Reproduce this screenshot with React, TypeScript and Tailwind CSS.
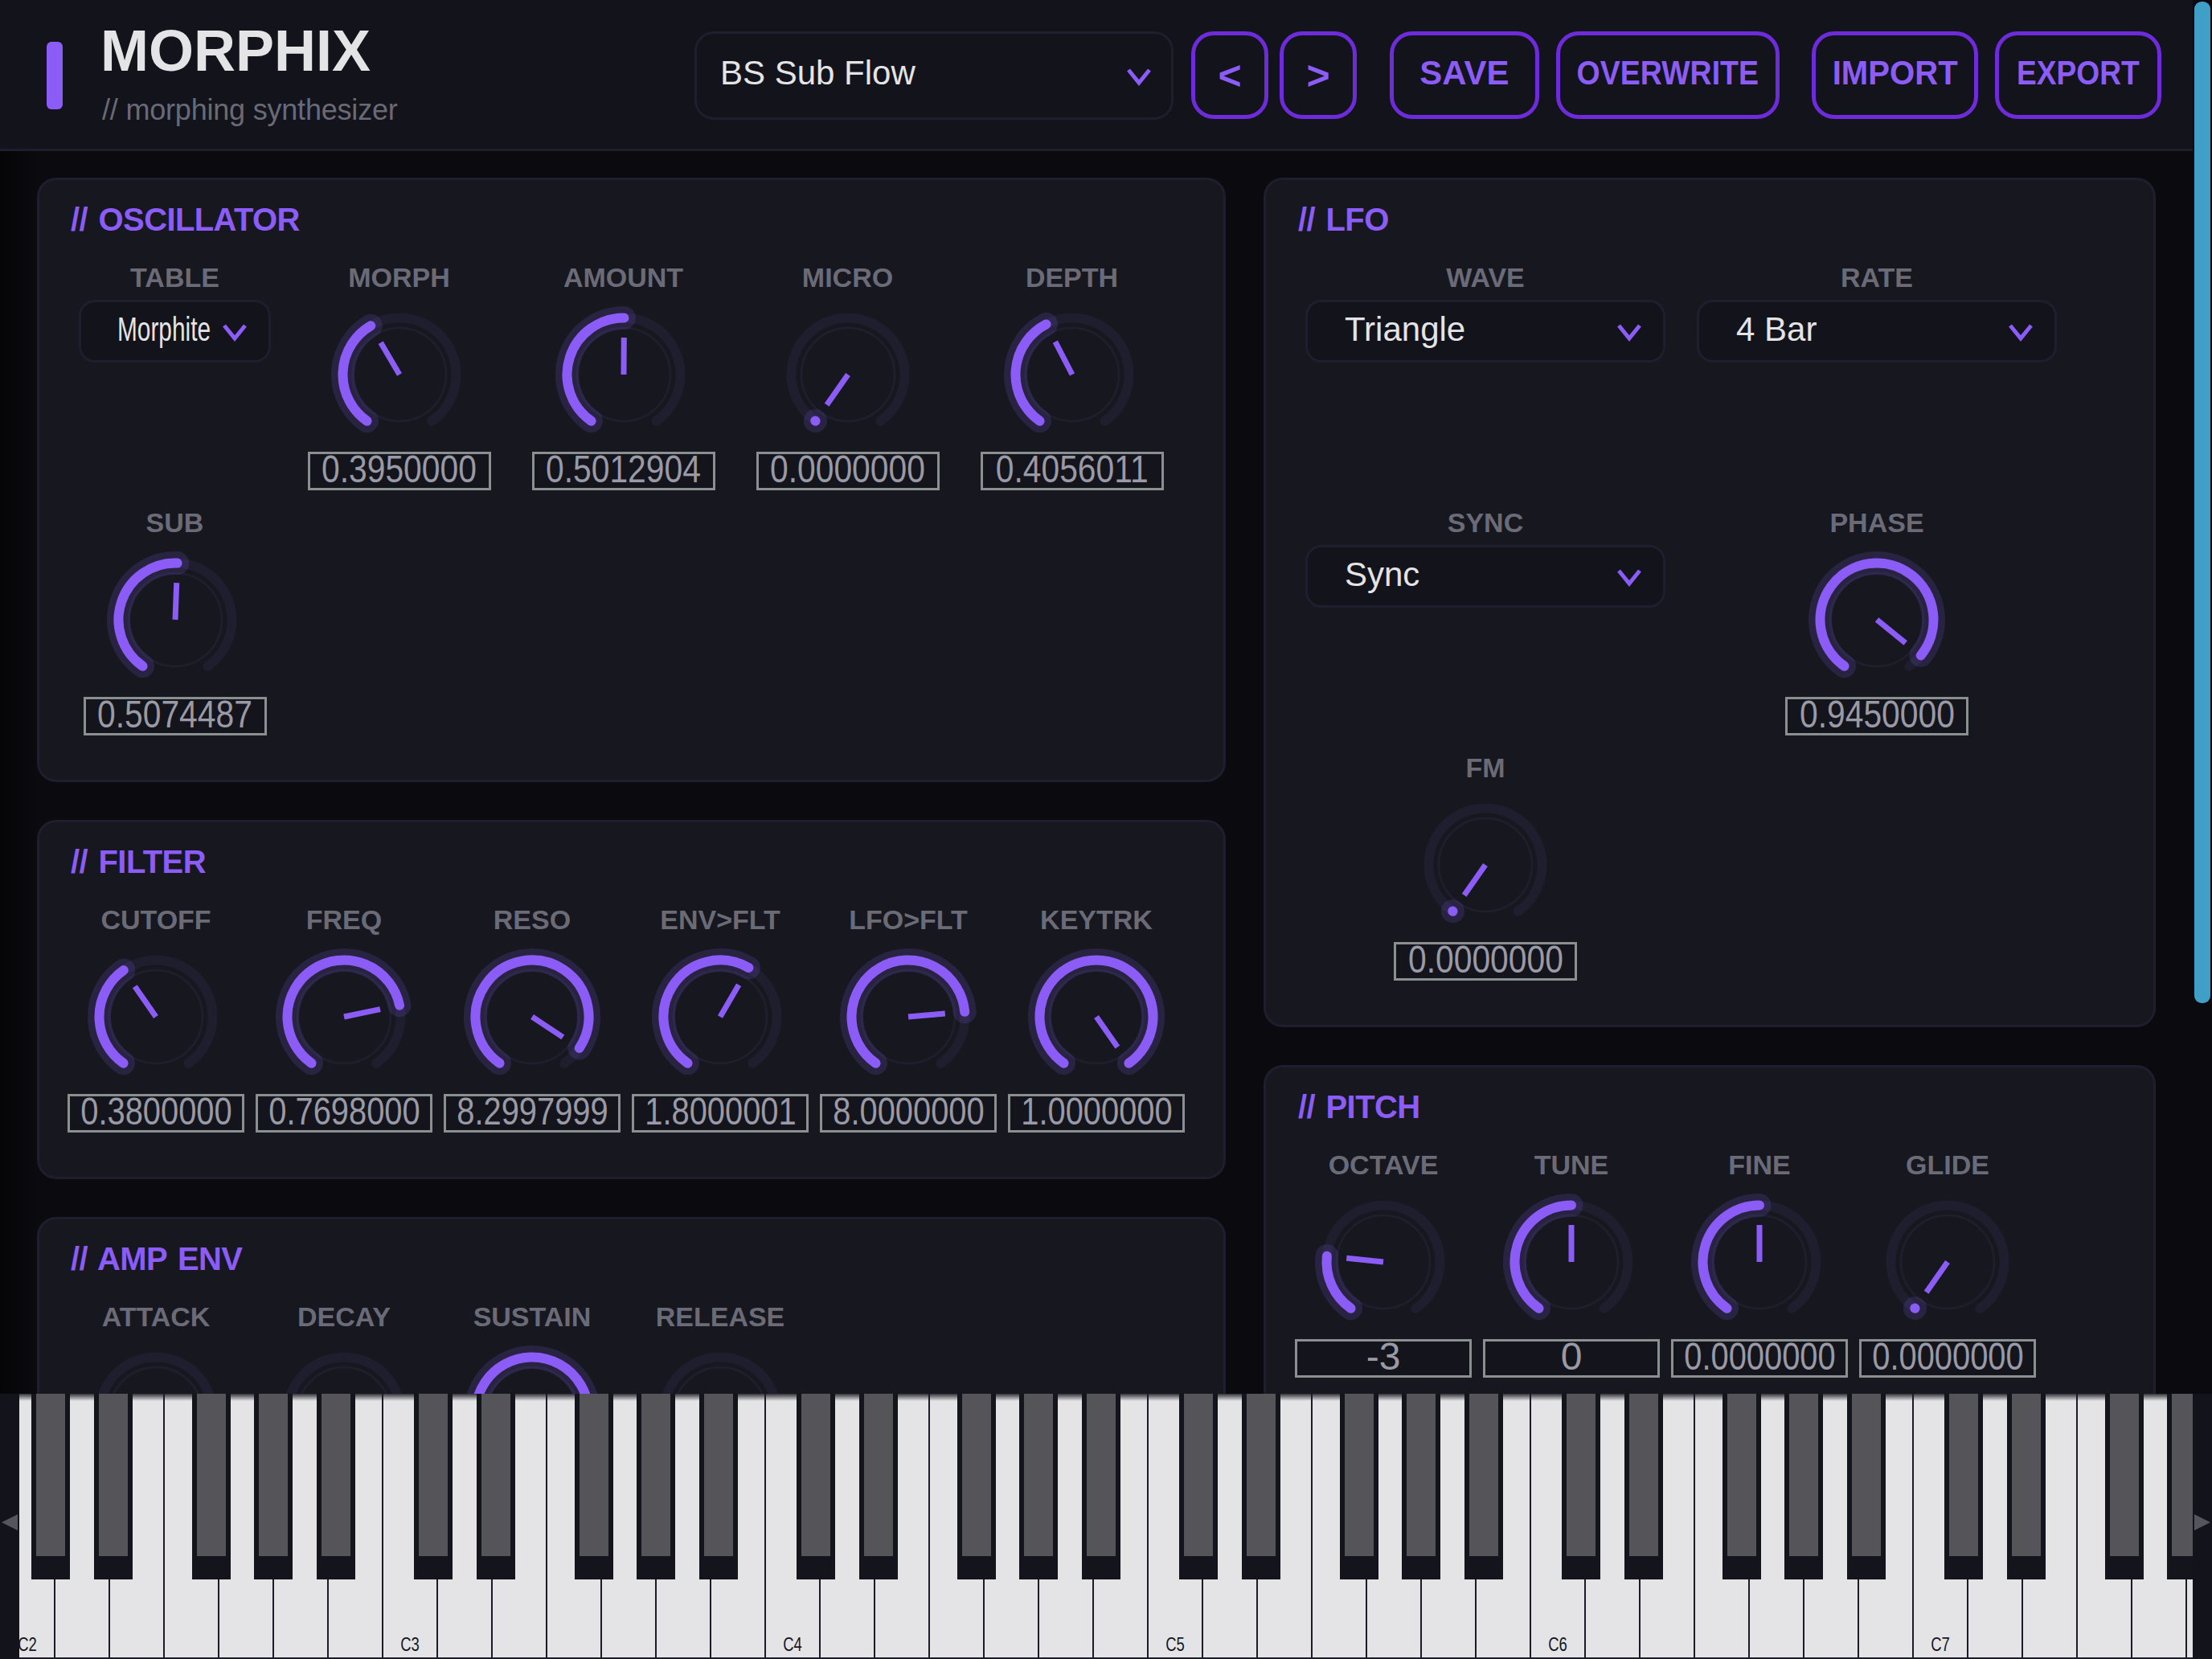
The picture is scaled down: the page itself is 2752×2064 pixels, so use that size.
import React from "react";

const ACC = "#8b5cf6";

function polar(r: number, deg: number) {
  const a = ((deg - 90) * Math.PI) / 180;
  return [r * Math.cos(a), r * Math.sin(a)];
}
function arc(r: number, from: number, to: number) {
  const [x1, y1] = polar(r, from);
  const [x2, y2] = polar(r, to);
  const large = to - from > 180 ? 1 : 0;
  return `M ${x1} ${y1} A ${r} ${r} 0 ${large} 1 ${x2} ${y2}`;
}

function Knob({ v }: { v: number }) {
  const end = -145 + 290 * v;
  const shown = Math.max(end, -144.7);
  const [px, py] = polar(46, end);
  return (
    <svg width="180" height="180" viewBox="-90 -90 180 180" className="mt-[11px] shrink-0">
      <path d={arc(70.5, -145, 145)} fill="none" stroke="#1e1e2e" strokeWidth="12" strokeLinecap="round" />
      <circle r="58" fill="none" stroke="#1e1e2c" strokeWidth="3" />
      <path d={arc(70.5, -145, shown)} fill="none" stroke={ACC} strokeOpacity="0.17" strokeWidth="29" strokeLinecap="round" />
      <path d={arc(70.5, -145, shown)} fill="none" stroke={ACC} strokeWidth="12" strokeLinecap="round" />
      <line x1="0" y1="0" x2={px} y2={py} stroke={ACC} strokeWidth="7" />
    </svg>
  );
}

function Chevron() {
  return (
    <svg width="30" height="22" viewBox="0 0 30 22" className="shrink-0 mt-[4px]">
      <path d="M2 2 L15 18 L28 2" fill="none" stroke={ACC} strokeWidth="5" />
    </svg>
  );
}

function Label({ children }: { children: React.ReactNode }) {
  return <div className="h-[40px] leading-[40px] text-[34px] font-bold text-[#6b6b78] whitespace-nowrap">{children}</div>;
}

function Value({ text, wide }: { text: string; wide?: boolean }) {
  const squeeze = text.length > 3 ? (wide ? "scale-x-[0.85]" : "scale-x-[0.83]") : "";
  return (
    <div className={`mt-[6px] h-[48px] border-[3px] border-[#8a9090] bg-[#14151c] flex items-center justify-center ${wide ? "w-[228px]" : "w-[220px]"}`}>
      <span className={`text-[48px] leading-[38px] pb-[4px] text-[#9a9aa6] whitespace-nowrap ${squeeze}`}>{text}</span>
    </div>
  );
}

function KnobCell({ label, v, text, wide }: { label: string; v: number; text?: string; wide?: boolean }) {
  return (
    <div className="flex flex-col items-center h-[285px]">
      <Label>{label}</Label>
      <Knob v={v} />
      {text ? <Value text={text} wide={wide} /> : null}
    </div>
  );
}

function SelectCell({ label, text }: { label: string; text: string }) {
  return (
    <div className="flex flex-col items-center h-[285px]">
      <Label>{label}</Label>
      <div className="mt-[8px] w-[448px] h-[78px] rounded-[20px] border-[3px] border-[#1e1e2e] bg-[#12131b] flex items-center justify-between pl-[46px] pr-[27px]">
        <span className="text-[42px] leading-[60px] pb-[4px] text-[#e4e4e7]">{text}</span>
        <Chevron />
      </div>
    </div>
  );
}

function Panel({ title, children, className, pad }: { title: string; children: React.ReactNode; className: string; pad: string }) {
  return (
    <section className={`rounded-[24px] border-[3px] border-[#1e1e2e] bg-[#16171f] pt-[26px] pb-[55px] ${pad}`}>
      <h2 className="h-[46px] leading-[46px] pl-[4px] text-[40px] font-bold tracking-[-0.6px] [word-spacing:3px] text-[#8b5cf6]">{title}</h2>
      <div className={`mt-[29px] grid gap-y-[20px] ${className}`}>{children}</div>
    </section>
  );
}

function HeadButton({ children, className }: { children: React.ReactNode; className: string }) {
  return (
    <button className={`h-[109px] shrink-0 rounded-[28px] border-[5px] border-[#6d2bd9] bg-[#12131b] text-[42px] leading-[60px] font-bold text-[#8b5cf6] flex items-center justify-center whitespace-nowrap ${className}`}>
      {children}
    </button>
  );
}

const WHITE = Array.from({ length: 41 }, (_, i) => i);
const BLACK_OFFS = [38, 116, 238, 315, 393];
const BLACKS = Array.from({ length: 6 }, (_, o) => BLACK_OFFS.map((b) => b - 23 + o * 476)).flat();
const NAMES = ["C2", "C3", "C4", "C5", "C6", "C7"];

function Keyboard() {
  return (
    <div className="flex h-[330px] shrink-0 bg-[#12131b] relative z-10">
      <div className="w-[24px] shrink-0 flex items-center justify-center pb-[10px]">
        <svg width="20" height="20" viewBox="0 0 20 20"><path d="M0 10 L20 0 L20 20 Z" fill="#55555f" /></svg>
      </div>
      <div className="relative flex-1 overflow-hidden">
        <div className="flex h-full ml-[-23px]">
          {WHITE.map((i) => (
            <div key={i} className="relative w-[68px] shrink-0 h-full border-r-2 border-b-2 border-[#1c1c28] bg-[linear-gradient(to_bottom,#33333a,#e4e4e7_9px)]">
              {i % 7 === 0 && (
                <span className="absolute bottom-[2px] left-0 right-0 text-center text-[24px] leading-[28px] text-[#16161c] scale-x-[0.77]">{NAMES[i / 7]}</span>
              )}
            </div>
          ))}
        </div>
        {BLACKS.map((x) => (
          <div key={x} className="absolute top-0 w-[48px] h-[231px] bg-[#14141c]" style={{ left: x }}>
            <div className="absolute top-0 left-[6px] w-[36px] h-[202px] bg-[#555559]" />
          </div>
        ))}
      </div>
      <div className="w-[24px] shrink-0 flex items-center justify-center pb-[10px]">
        <svg width="20" height="20" viewBox="0 0 20 20"><path d="M20 10 L0 0 L0 20 Z" fill="#55555f" /></svg>
      </div>
    </div>
  );
}

export default function App() {
  return (
    <div className="relative w-[2752px] h-[2064px] overflow-hidden flex flex-col bg-[linear-gradient(to_right,#050507,#0a0a0f_45px)] font-['Liberation_Sans',Arial,sans-serif]">
      <div className="flex-1 min-h-0 overflow-hidden w-[2728px]">
        <header className="h-[188px] border-b-[3px] border-[#1e1e2e] bg-[#12131b] flex items-start pl-[58px]">
          <div className="mt-[52px] w-[20px] h-[84px] rounded-[6px] bg-[#8b5cf6] shrink-0" />
          <div className="ml-[47px] pt-[27px] w-[739px] shrink-0">
            <div className="h-[72px] leading-[72px] text-[72px] font-bold text-[#e4e4e7]">MORPHIX</div>
            <div className="mt-[18px] pl-[2px] h-[40px] leading-[40px] text-[36px] tracking-[-0.2px] text-[#6a6a77]">// morphing synthesizer</div>
          </div>
          <div className="mt-[39px] flex items-start">
            <div className="w-[596px] h-[110px] rounded-[24px] border-[3px] border-[#1e1e2e] bg-[#12131b] flex items-center justify-between pl-[29px] pr-[25px] mr-[22px]">
              <span className="text-[42px] leading-[60px] pb-[6px] text-[#e4e4e7]">BS Sub Flow</span>
              <Chevron />
            </div>
            <HeadButton className="w-[96px] mr-[14px]"><span className="text-[50px]">&lt;</span></HeadButton>
            <HeadButton className="w-[96px] mr-[41px]"><span className="text-[50px]">&gt;</span></HeadButton>
            <HeadButton className="w-[186px] mr-[21px]"><span className="pb-[6px]">SAVE</span></HeadButton>
            <HeadButton className="w-[278px] mr-[40px]"><span className="pb-[6px] scale-x-[0.893]">OVERWRITE</span></HeadButton>
            <HeadButton className="w-[207px] mr-[21px]"><span className="pb-[6px] scale-x-[0.955]">IMPORT</span></HeadButton>
            <HeadButton className="w-[207px]"><span className="pb-[6px] scale-x-[0.885]">EXPORT</span></HeadButton>
          </div>
        </header>

        <main className="pt-[33px] pl-[46px] grid grid-cols-[1479px_1110px] gap-x-[47px] items-start">
          <div className="flex flex-col gap-[47px]">
            <Panel pad="px-[35px]" title="// OSCILLATOR" className="grid-cols-[repeat(5,267px)] gap-x-[12px]">
              <div className="flex flex-col items-center h-[285px]">
                <Label>TABLE</Label>
                <div className="mt-[8px] w-[239px] h-[78px] rounded-[20px] border-[3px] border-[#1e1e2e] bg-[#12131b] flex items-center pl-[45px]">
                  <span className="w-[116px] origin-left scale-x-[0.71] text-[42px] leading-[60px] pb-[4px] text-[#e4e4e7] whitespace-nowrap">Morphite</span>
                  <span className="ml-[15px] flex"><Chevron /></span>
                </div>
              </div>
              <KnobCell wide label="MORPH" v={0.395} text="0.3950000" />
              <KnobCell wide label="AMOUNT" v={0.5013} text="0.5012904" />
              <KnobCell wide label="MICRO" v={0} text="0.0000000" />
              <KnobCell wide label="DEPTH" v={0.4056} text="0.4056011" />
              <KnobCell wide label="SUB" v={0.5074} text="0.5074487" />
            </Panel>
            <Panel pad="px-[35px]" title="// FILTER" className="grid-cols-[repeat(6,220px)] gap-x-[14px]">
              <KnobCell label="CUTOFF" v={0.38} text="0.3800000" />
              <KnobCell label="FREQ" v={0.7698} text="0.7698000" />
              <KnobCell label="RESO" v={0.926} text="8.2997999" />
              <KnobCell label="ENV>FLT" v={0.604} text="1.8000001" />
              <KnobCell label="LFO>FLT" v={0.793} text="8.0000000" />
              <KnobCell label="KEYTRK" v={1} text="1.0000000" />
            </Panel>
            <Panel pad="px-[35px]" title="// AMP ENV" className="grid-cols-[repeat(6,220px)] gap-x-[14px]">
              <KnobCell label="ATTACK" v={0} />
              <KnobCell label="DECAY" v={0} />
              <KnobCell label="SUSTAIN" v={0.8} />
              <KnobCell label="RELEASE" v={0} />
            </Panel>
          </div>
          <div className="flex flex-col gap-[47px]">
            <Panel pad="px-[36px]" title="// LFO" className="grid-cols-[repeat(2,474px)] gap-x-[13px]">
              <SelectCell label="WAVE" text="Triangle" />
              <SelectCell label="RATE" text="4 Bar" />
              <SelectCell label="SYNC" text="Sync" />
              <KnobCell wide label="PHASE" v={0.945} text="0.9450000" />
              <KnobCell wide label="FM" v={0} text="0.0000000" />
            </Panel>
            <Panel pad="px-[36px]" title="// PITCH" className="grid-cols-[repeat(4,220px)] gap-x-[14px]">
              <KnobCell label="OCTAVE" v={0.21} text="-3" />
              <KnobCell label="TUNE" v={0.5} text="0" />
              <KnobCell label="FINE" v={0.5} text="0.0000000" />
              <KnobCell label="GLIDE" v={0} text="0.0000000" />
            </Panel>
          </div>
        </main>
      </div>
      <Keyboard />
      <div className="absolute top-[2px] left-[2730px] w-[20px] h-[1246px] rounded-[9px] bg-[#3f9fc7] z-20" />
    </div>
  );
}
